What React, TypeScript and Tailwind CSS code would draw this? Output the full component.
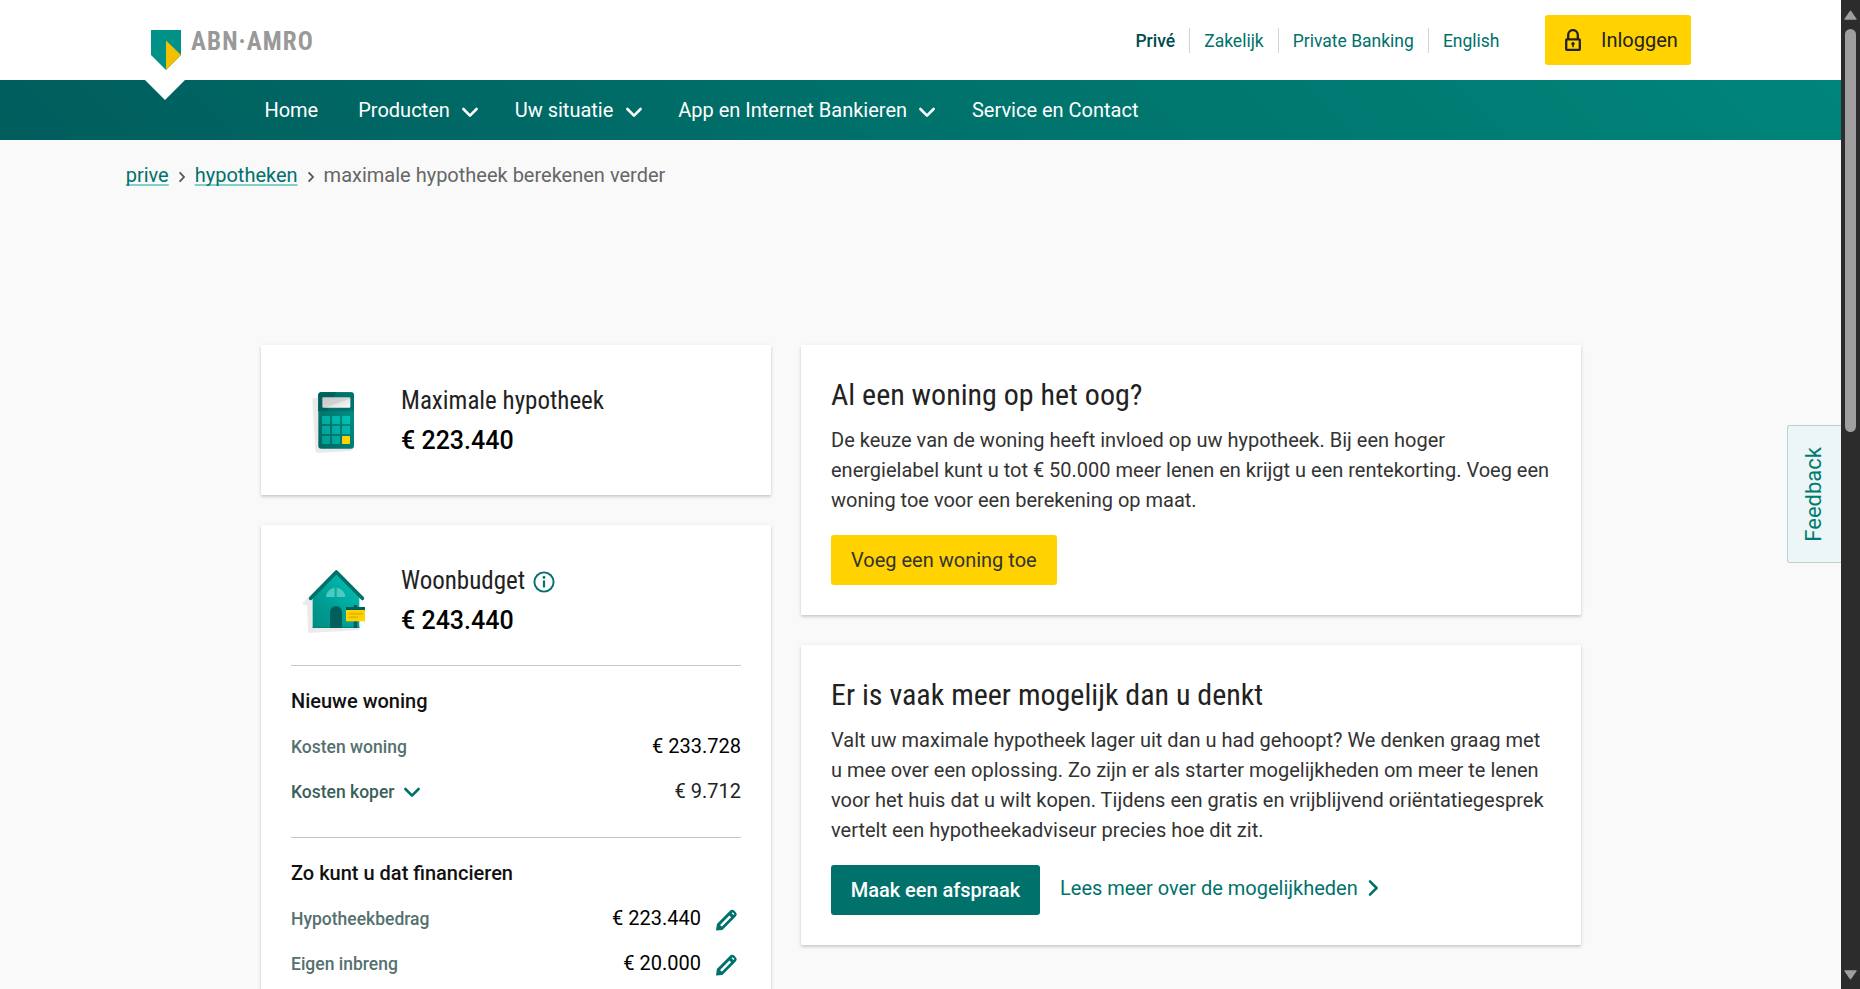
import type { ReactNode } from 'react';

function Chevron({ className }: { className: string }) {
  return (
    <svg viewBox="0 0 20 20" className={className} fill="none" stroke="currentColor" strokeWidth="2.6" strokeLinecap="round" strokeLinejoin="round">
      <path d="M3.4 7 L10 13.6 L16.6 7" />
    </svg>
  );
}

function Logo() {
  return (
    <a className="flex items-start">
      <svg viewBox="0 0 30 40" className="h-10 w-[30px]">
        <path d="M0 0 H30 V25 L15 40 L0 25 Z" fill="#009286" />
        <path d="M15 10.5 L30 25 L15 40 Z" fill="#f3c000" />
      </svg>
      <span className="ml-[10px] font-['Roboto_Condensed',sans-serif] text-[25px] leading-[24px] font-bold tracking-[1.1px] text-[#999]">
        ABN·AMRO
      </span>
    </a>
  );
}

function LockIcon() {
  return (
    <svg viewBox="0 0 16 22" className="h-[22px] w-4" fill="none" stroke="#222" strokeWidth="2.3">
      <path d="M3.2 10.5 V5.8 A4.8 4.7 0 0 1 12.8 5.8 V10.5" />
      <rect x="1.2" y="10.3" width="13.6" height="10.5" rx="0.6" />
      <circle cx="8" cy="14.8" r="1.7" fill="#222" stroke="none" />
      <path d="M8 15 V18.2" strokeWidth="1.5" />
    </svg>
  );
}

function Calculator() {
  const cols = [66, 96, 126];
  const rows = [108, 138, 168];
  return (
    <svg viewBox="0 0 240 240" className="h-20 w-20">
      <defs>
        <linearGradient id="calcBody" x1="0" y1="1" x2="1" y2="0">
          <stop offset="0" stopColor="#00665f" />
          <stop offset="1" stopColor="#00968c" />
        </linearGradient>
        <linearGradient id="calcKeys" gradientUnits="userSpaceOnUse" x1="66" y1="191" x2="150" y2="108">
          <stop offset="0" stopColor="#009c92" />
          <stop offset="1" stopColor="#00c2b6" />
        </linearGradient>
        <linearGradient id="calcScreen" x1="0" y1="0" x2="1" y2="1">
          <stop offset="0" stopColor="#c9c9c9" />
          <stop offset="0.55" stopColor="#d4d4d4" />
          <stop offset="0.56" stopColor="#e6e6e6" />
          <stop offset="1" stopColor="#fafafa" />
        </linearGradient>
      </defs>
      <path d="M42 54 L60 52 L160 205 Q156 214 148 213 L56 219 Q47 219 46 210 L37 60 Q37 55 42 54 Z" fill="#e9e9e9" />
      <rect x="55" y="37" width="107" height="169" rx="9" fill="url(#calcBody)" />
      <path d="M55 94 V46 Q55 37 64 37 H153 Q162 37 162 46 V94 Z" fill="#00716b" />
      <path d="M55 94 V46 Q55 37 64 37 H110 L80 94 Z" fill="#00605c" />
      <rect x="67" y="52" width="84" height="31" rx="3" fill="url(#calcScreen)" />
      {rows.map((y) =>
        cols.map((x) => (
          <rect key={`${x}-${y}`} x={x} y={y} width="24" height="24" rx="2" fill={x === 126 && y === 168 ? '#ffd200' : 'url(#calcKeys)'} />
        )),
      )}
    </svg>
  );
}

function House() {
  return (
    <svg viewBox="0 0 240 240" className="h-20 w-20">
      <defs>
        <linearGradient id="houseWall" x1="0" y1="1" x2="1" y2="0">
          <stop offset="0" stopColor="#008c82" />
          <stop offset="0.3" stopColor="#009a90" />
          <stop offset="1" stopColor="#00c4b8" />
        </linearGradient>
      </defs>
      <path d="M102 50 L116 38 L150 100 L190 203 L190 210 L40 219 L36 135 L26 135 Q20 131 25 126 Z" fill="#ebebeb" />
      <path d="M53 203 V108 L124 38 L193 106 V203 Z" fill="url(#houseWall)" />
      <path d="M47 115 L124 36 L202 115" fill="none" stroke="#00716b" strokeWidth="11" strokeLinejoin="round" strokeLinecap="round" />
      <path d="M93 111 A29 29 0 0 1 119 83 V111 Z" fill="#4dc9c0" />
      <path d="M125 83 A29 29 0 0 1 151 111 H125 Z" fill="#4dc9c0" />
      <path d="M105 203 V156 A18 18 0 0 1 141 156 V203 Z" fill="#005e5d" />
      <path d="M53 202 H193" stroke="#00857b" strokeWidth="4" />
      <path d="M105 202 H141" stroke="#005e5d" strokeWidth="4" />
      <rect x="176" y="135" width="11" height="69" rx="4" fill="#005e5d" />
      <rect x="153" y="141" width="57" height="43" fill="#ffd200" />
      <rect x="153" y="141" width="57" height="9" fill="#005e5d" />
      <path d="M163 161 H201 M163 172 H186" stroke="#e6b800" strokeWidth="6" strokeLinecap="round" />
    </svg>
  );
}

function InfoIcon() {
  return (
    <svg viewBox="0 0 22 22" className="mt-[2px] ml-[7.5px] h-[22px] w-[22px]" fill="none" stroke="#00716b" strokeWidth="1.9">
      <circle cx="11" cy="11" r="9.6" />
      <path d="M11 9.4 V16.4" strokeWidth="2.2" />
      <circle cx="11" cy="6.4" r="1.4" fill="#00716b" stroke="none" />
    </svg>
  );
}

function Pencil() {
  return (
    <svg viewBox="0 0 22 22" className="mt-[4px] mr-[4px] ml-[14px] h-[22px] w-[22px]">
      <path
        fillRule="evenodd"
        fill="#00716b"
        d="M1 21.6 L1.9 15 L15 1.7 Q17 -0.2 19.2 1.6 L20.9 3.4 Q22.6 5.4 20.7 7.6 L7.4 20.9 Z M5.3 15.7 L14.4 6.6 L16.1 8.3 L7 17.4 Q5.2 17.4 5.3 15.7 Z M16.6 4.2 L17.6 3.2 L19.4 5 L18.4 6 Z"
      />
    </svg>
  );
}

const NAV = [
  { label: 'Home', menu: false },
  { label: 'Producten', menu: true },
  { label: 'Uw situatie', menu: true },
  { label: 'App en Internet Bankieren', menu: true },
  { label: 'Service en Contact', menu: false },
];

function Header() {
  return (
    <header>
      <div className="flex h-20 items-start justify-between bg-white pr-[150px] pl-[151px]">
        <div className="pt-[30px]">
          <Logo />
        </div>
        <div className="flex items-center pt-[15px]">
          <ul className="flex items-center text-[17.5px] leading-[23px] text-[#00716b]">
            <li className="pt-0.5 pr-[14px] font-medium text-[#004c4c]">Privé</li>
            <li className="border-l border-[#d4d4d4] px-[14px] pt-0.5">Zakelijk</li>
            <li className="border-l border-[#d4d4d4] px-[14px] pt-0.5">Private Banking</li>
            <li className="border-l border-[#d4d4d4] pt-0.5 pl-[14px]">English</li>
          </ul>
          <button className="ml-[45.5px] flex h-[50px] w-[146px] items-center rounded-[3px] bg-[#ffd200] pl-5 text-xl text-[#222]">
            <LockIcon />
            <span className="ml-5">Inloggen</span>
          </button>
        </div>
      </div>
      <nav className="flex h-[60px] bg-[linear-gradient(45deg,#005e5d,#00857a)] text-xl text-white">
        <svg viewBox="0 0 40 20" className="ml-[145px] h-5 w-10">
          <path d="M0 0 H40 L20 20 Z" fill="#fff" />
        </svg>
        <ul className="ml-[79.4px] flex items-center gap-10">
          {NAV.map((item) => (
            <li key={item.label} className="flex items-center whitespace-nowrap">
              {item.label}
              {item.menu && <Chevron className="mt-[3px] mr-[-5.5px] ml-[10.4px] h-5 w-5" />}
            </li>
          ))}
        </ul>
      </nav>
    </header>
  );
}

function CrumbArrow() {
  return (
    <svg viewBox="0 0 26 20" className="mt-[3px] h-5 w-[26px]" fill="none" stroke="#555" strokeWidth="1.8">
      <path d="M10.6 5.4 L15 10 L10.6 14.6" />
    </svg>
  );
}

function Breadcrumb() {
  const link = 'text-[#00716b] underline decoration-[#80d0c9] decoration-2 underline-offset-[2px] [text-decoration-skip-ink:none]';
  return (
    <div className="flex h-[70px] items-center pl-[125.7px] text-xl text-[#666]">
      <a className={link}>prive</a>
      <CrumbArrow />
      <a className={link}>hypotheken</a>
      <CrumbArrow />
      <span>maximale hypotheek berekenen verder</span>
    </div>
  );
}

function Card({ className, children }: { className: string; children: ReactNode }) {
  return (
    <section className={`rounded-[1px] bg-white shadow-[0_2px_3px_rgba(0,0,0,0.17),0_0_5px_rgba(0,0,0,0.05)] ${className}`}>{children}</section>
  );
}

function Total({ title, value, icon, info }: { title: string; value: string; icon: ReactNode; info?: boolean }) {
  return (
    <div className="flex h-20">
      {icon}
      <div className="pt-px">
        <h3 className="flex h-10 items-center font-['Roboto_Condensed',sans-serif] text-[25px] text-[#222]">
          {title}
          {info && <InfoIcon />}
        </h3>
        <p className="flex h-10 items-center text-[25px] font-medium text-black">{value}</p>
      </div>
    </div>
  );
}

function Row({ label, value, expand, edit }: { label: string; value: string; expand?: boolean; edit?: boolean }) {
  return (
    <div className="flex h-[45px] items-center justify-between">
      <span className={`flex items-center pt-px text-[17.5px] font-medium ${expand ? 'text-[#3a5f5c]' : 'text-[#55716f]'}`}>
        {label}
        {expand && <Chevron className="-mt-px ml-[7px] h-5 w-5 text-[#00716b]" />}
      </span>
      <span className={`-mt-px flex items-center text-xl ${expand ? 'text-[#222]' : 'text-black'}`}>
        {value}
        {edit && <Pencil />}
      </span>
    </div>
  );
}

function Panel({ title, text, height, children }: { title: string; text: string; height: string; children: ReactNode }) {
  return (
    <Card className={`p-[30px] text-xl ${height}`}>
      <h2 className="font-['Roboto_Condensed',sans-serif] text-[30px] leading-10 text-[#222]">{title}</h2>
      <p className="mt-[10px] leading-[30px] text-[#333]">{text}</p>
      <div className="mt-5 flex items-center">{children}</div>
    </Card>
  );
}

export default function App() {
  return (
    <div className="flex h-[989px] w-[1860px] overflow-hidden font-['Roboto',sans-serif]">
      <div className="relative w-[1841px] shrink-0 overflow-hidden bg-[#f9f9f9]">
        <Header />
        <Breadcrumb />
        <main className="mt-[135px] ml-[261px] flex items-start gap-[30px]">
          <div className="flex w-[510px] flex-col gap-[30px]">
            <Card className="h-[150px] pt-[35px] pl-[39px]">
              <Total title="Maximale hypotheek" value="€ 223.440" icon={<div className="w-[101px]"><Calculator /></div>} />
            </Card>
            <Card className="h-[600px] px-[30px] pt-[35px]">
              <Total title="Woonbudget" value="€ 243.440" info icon={<div className="w-[110px] pl-1"><House /></div>} />
              <div className="mt-[25px] border-t border-[#c6c9c9] pt-5">
                <h4 className="text-xl leading-[30px] font-medium text-[#111]">Nieuwe woning</h4>
                <div className="pt-2 pb-[23px]">
                  <Row label="Kosten woning" value="€ 233.728" />
                  <Row label="Kosten koper" value="€ 9.712" expand />
                </div>
              </div>
              <div className="border-t border-[#c6c9c9] pt-5">
                <h4 className="text-xl leading-[30px] font-medium text-[#111]">Zo kunt u dat financieren</h4>
                <div className="pt-2">
                  <Row label="Hypotheekbedrag" value="€ 223.440" edit />
                  <Row label="Eigen inbreng" value="€ 20.000" edit />
                </div>
              </div>
            </Card>
          </div>
          <div className="flex w-[780px] flex-col gap-[30px]">
            <Panel
              height="h-[270px]"
              title="Al een woning op het oog?"
              text="De keuze van de woning heeft invloed op uw hypotheek. Bij een hoger energielabel kunt u tot € 50.000 meer lenen en krijgt u een rentekorting. Voeg een woning toe voor een berekening op maat."
            >
              <button className="h-[50px] rounded-[3px] bg-[#ffd200] px-5 text-[#333]">Voeg een woning toe</button>
            </Panel>
            <Panel
              height="h-[300px]"
              title="Er is vaak meer mogelijk dan u denkt"
              text="Valt uw maximale hypotheek lager uit dan u had gehoopt? We denken graag met u mee over een oplossing. Zo zijn er als starter mogelijkheden om meer te lenen voor het huis dat u wilt kopen. Tijdens een gratis en vrijblijvend oriëntatiegesprek vertelt een hypotheekadviseur precies hoe dit zit."
            >
              <button className="h-[50px] w-[209px] rounded-[3px] bg-[#00716b] font-medium tracking-[-0.03px] whitespace-nowrap text-white">Maak een afspraak</button>
              <a className="mb-1 ml-5 flex items-center text-[#00716b]">
                Lees meer over de mogelijkheden
                <Chevron className="ml-[5px] h-5 w-5 -rotate-90" />
              </a>
            </Panel>
          </div>
        </main>
        <div className="absolute top-[425px] right-0 flex h-[138px] w-[54px] items-center justify-center rounded-l-[3px] border border-r-0 border-[#b9d3d1] bg-[#edf6f6] pr-0.5">
          <span className="rotate-180 text-[22px] text-[#007b72] [writing-mode:vertical-rl]">Feedback</span>
        </div>
      </div>
      <div className="flex w-[19px] flex-col items-center bg-[#2c2c2c] pt-[10px] pb-[9px]">
        <svg viewBox="0 0 13 10" className="h-[10px] w-[13px]">
          <path d="M6.5 0.8 L12.3 9.2 H0.7 Z" fill="#9f9f9f" stroke="#9f9f9f" strokeLinejoin="round" />
        </svg>
        <div className="mt-[9px] h-[403px] w-[11px] rounded-full bg-[#9f9f9f]" />
        <svg viewBox="0 0 13 10" className="mt-auto h-[10px] w-[13px]">
          <path d="M6.5 9.2 L12.3 0.8 H0.7 Z" fill="#9f9f9f" stroke="#9f9f9f" strokeLinejoin="round" />
        </svg>
      </div>
    </div>
  );
}
